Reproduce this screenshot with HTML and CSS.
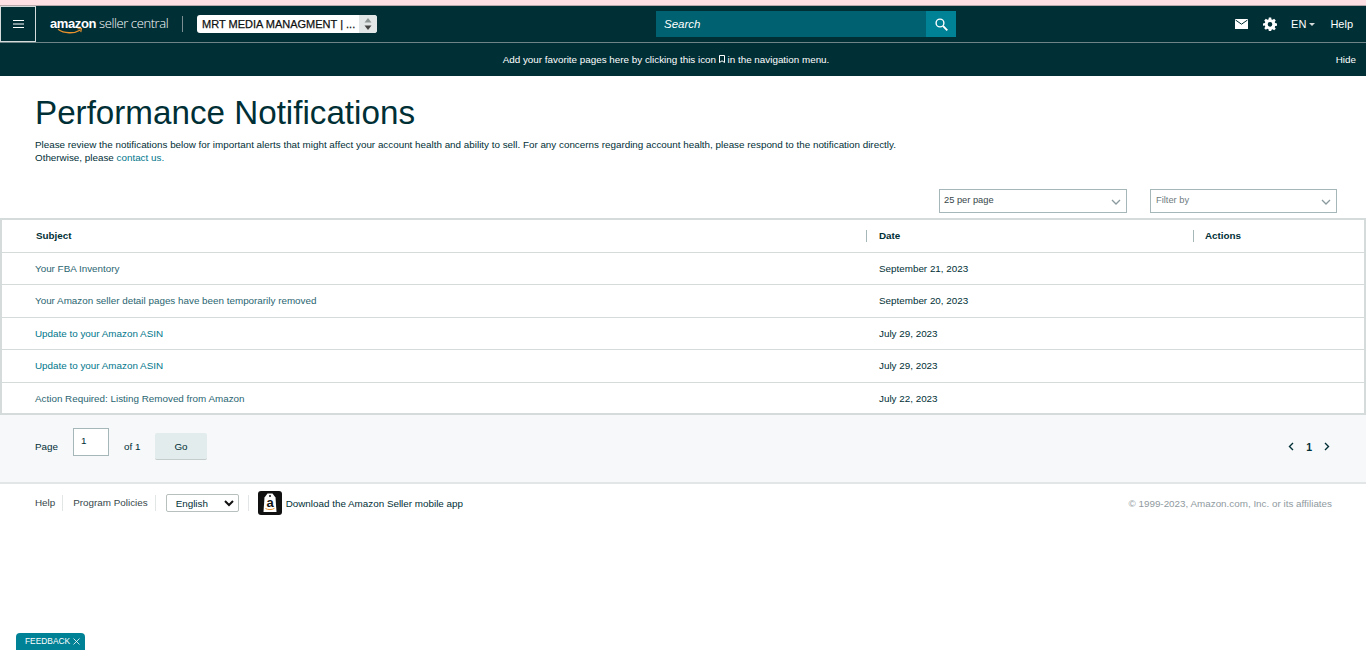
FILE: index.html
```html
<!DOCTYPE html>
<html lang="en">
<head>
  <meta charset="UTF-8">
  <title>Performance Notifications</title>
  <link rel="stylesheet" href="styles.css">
</head>
<body>
  <div class="top-strip"></div>
  <header class="navbar">
    <button class="menu-btn" aria-label="Menu">
      <svg width="11" height="8" viewBox="0 0 11 8"><path d="M0 .5h11M0 4h11M0 7.500h11" stroke="#fff" stroke-width="1"/></svg>
    </button>
    <div class="logo">
      <span class="logo-amazon">amazon</span><span class="logo-seller">seller central</span>
      <svg class="logo-smile" width="26" height="7" viewBox="0 0 26 7"><path d="M1 1.2C7 5.6 17 6 23.5 2" fill="none" stroke="#e8912d" stroke-width="1.3"/><path d="M20.5 .8l4-.3-.7 3.6" fill="none" stroke="#e8912d" stroke-width="1.1"/></svg>
    </div>
    <div class="nav-divider"></div>
    <div class="account-select">
      <span class="account-name">MRT MEDIA MANAGMENT | ...</span>
      <span class="account-arrows">
        <svg width="8" height="12" viewBox="0 0 8 12"><path d="M4 0l3.5 4.5h-7z" fill="#8d9494"/><path d="M4 12L.5 7.500h7z" fill="#444"/></svg>
      </span>
    </div>
    <form class="search">
      <span class="search-text">Search</span>
      <span class="search-btn">
        <svg width="13" height="13" viewBox="0 0 13 13"><circle cx="5" cy="5" r="3.900" fill="none" stroke="#fff" stroke-width="1.400"/><path d="M8 8l4.300 4.300" stroke="#fff" stroke-width="1.800"/></svg>
      </span>
    </form>
    <nav class="nav-right">
      <svg class="mail" width="13" height="10" viewBox="0 0 13 10"><path d="M0 0h13v10H0z" fill="#fff"/><path d="M.5 1l6 4.200 6-4.200" fill="none" stroke="#002f36" stroke-width="1"/></svg>
      <svg class="gear" width="14" height="14" viewBox="0 0 24 24"><path fill="#fff" fill-rule="evenodd" d="M10 1h4l.6 3.100 1.900.8L19.100 3.100l2.800 2.800-1.800 2.600.8 1.900L24 11v4l-3.100.6-.8 1.900 1.800 2.600-2.800 2.800-2.600-1.800-1.900.8L14 24h-4l-.6-3.100-1.900-.8-2.600 1.800-2.800-2.800 1.800-2.600-.8-1.900L0 15v-4l3.100-.6.800-1.900L2.100 5.900l2.800-2.800 2.600 1.800 1.900-.8zM12 8.500a4 4 0 1 0 0 8 4 4 0 0 0 0-8z"/></svg>
      <span class="lang">EN<i class="caret"></i></span>
      <span class="help">Help</span>
    </nav>
  </header>
  <div class="favorites">
    <span class="fav-text">Add your favorite pages here by clicking this icon
      <svg width="6" height="8" viewBox="0 0 6 8"><path d="M.5.5h5v7L3 5.800.5 7.500z" fill="none" stroke="#fff" stroke-width="1"/></svg>
      in the navigation menu.</span>
    <span class="fav-hide">Hide</span>
  </div>

  <main>
    <h1>Performance Notifications</h1>
    <p class="intro">Please review the notifications below for important alerts that might affect your account health and ability to sell. For any concerns regarding account health, please respond to the notification directly.<br>Otherwise, please <a href="#">contact us.</a></p>

    <div class="filters">
      <div class="dropdown">25 per page
        <svg width="10" height="6" viewBox="0 0 10 6"><path d="M1 1l4 4 4-4" fill="none" stroke="#8a9a9e" stroke-width="1.300"/></svg>
      </div>
      <div class="dropdown placeholder">Filter by
        <svg width="10" height="6" viewBox="0 0 10 6"><path d="M1 1l4 4 4-4" fill="none" stroke="#8a9a9e" stroke-width="1.300"/></svg>
      </div>
    </div>

    <table class="notifications">
      <thead>
        <tr class="r33">
          <th class="col-subject">Subject</th>
          <th class="col-date"><span>Date</span></th>
          <th class="col-actions"><span>Actions</span></th>
        </tr>
      </thead>
      <tbody>
        <tr class="r32"><td class="col-subject"><a class="visited" href="#">Your FBA Inventory</a></td><td class="col-date">September 21, 2023</td><td></td></tr>
        <tr class="r33"><td class="col-subject"><a class="visited" href="#">Your Amazon seller detail pages have been temporarily removed</a></td><td class="col-date">September 20, 2023</td><td></td></tr>
        <tr class="r32"><td class="col-subject"><a href="#">Update to your Amazon ASIN</a></td><td class="col-date">July 29, 2023</td><td></td></tr>
        <tr class="r33"><td class="col-subject"><a href="#">Update to your Amazon ASIN</a></td><td class="col-date">July 29, 2023</td><td></td></tr>
        <tr class="r32"><td class="col-subject"><a class="visited" href="#">Action Required: Listing Removed from Amazon</a></td><td class="col-date">July 22, 2023</td><td></td></tr>
      </tbody>
    </table>

    <div class="pager">
      <span class="page-label">Page</span>
      <span class="page-input">1</span>
      <span class="page-of">of 1</span>
      <button class="go-btn">Go</button>
      <div class="page-nav">
        <svg width="6" height="9" viewBox="0 0 6 9"><path d="M5 1L1.500 4.500 5 8" fill="none" stroke="#002f36" stroke-width="1.400"/></svg>
        <b>1</b>
        <svg width="6" height="9" viewBox="0 0 6 9"><path d="M1 1l3.500 3.500L1 8" fill="none" stroke="#002f36" stroke-width="1.400"/></svg>
      </div>
    </div>
  </main>

  <footer class="site-footer">
    <a href="#" class="foot-link">Help</a>
    <a href="#" class="foot-link">Program Policies</a>
    <div class="lang-select">English
      <svg width="10" height="7" viewBox="0 0 10 7"><path d="M1 1l4 4 4-4" fill="none" stroke="#111" stroke-width="2"/></svg>
    </div>
    <div class="foot-sep"></div>
    <svg class="app-icon" width="24" height="24" viewBox="0 0 24 24">
      <rect width="24" height="24" rx="3" fill="#111"/>
      <path d="M6.500 6.500L9.500 2.500h5l3 4L18.500 21h-13z" fill="#fff"/>
      <circle cx="12" cy="5" r="1" fill="#111"/>
      <text x="12" y="16" font-size="13" font-weight="700" text-anchor="middle" fill="#111" font-family="Liberation Sans, sans-serif">a</text>
      <path d="M7.500 17.500c2.500 1.500 6.500 1.500 9-.2" fill="none" stroke="#e8912d" stroke-width="1"/>
    </svg>
    <span class="app-text">Download the Amazon Seller mobile app</span>
    <span class="copyright">© 1999-2023, Amazon.com, Inc. or its affiliates</span>
  </footer>

  <div class="feedback">FEEDBACK
    <svg width="7" height="7" viewBox="0 0 7 7"><path d="M.5.500l6 6M6.500.500l-6 6" stroke="#fff" stroke-width=".8"/></svg>
  </div>
</body>
</html>
```

FILE: styles.css
```css
* {
  box-sizing: border-box;
}
html, body {
  height: 100%;
}
body {
  margin: 0;
  font-family: "Liberation Sans", Arial, sans-serif;
  font-size: 9.85px;
  color: #002f36;
  background: #fff;
  overflow: hidden;
}
a {
  color: #00768b;
  text-decoration: none;
}
.top-strip {
  height: 6px;
  background: #fde0e4;
  border-bottom: 1px solid #b9a9ac;
}
.navbar {
  height: 37px;
  background: #002f36;
  border-bottom: 1px solid #6f8487;
  display: flex;
  align-items: center;
  color: #fff;
}
.menu-btn {
  width: 36px;
  height: 36px;
  padding: 0;
  background: #002f36;
  border: 1px solid #d5dbdb;
  display: flex;
  align-items: center;
  justify-content: center;
}
.logo {
  margin-left: 14px;
  width: 120px;
  height: 24px;
  position: relative;
  line-height: 22px;
  white-space: nowrap;
}
.logo-amazon {
  font-weight: 700;
  letter-spacing: -0.4px;
  font-size: 13px;
}
.logo-seller {
  margin-left: 3px;
  font-size: 13px;
  letter-spacing: -0.4px;
  font-family: "Open Sans", sans-serif;
  font-weight: 300;
}
.logo-smile {
  position: absolute;
  left: 7px;
  top: 16px;
}
.nav-divider {
  width: 1px;
  height: 16px;
  background: #7b8e91;
  margin-left: 12px;
}
.account-select {
  margin-left: 14px;
  width: 180px;
  height: 18px;
  background: #fff;
  border-radius: 3px;
  display: flex;
  align-items: center;
  justify-content: space-between;
  color: #0f1111;
  font-size: 11px;
  -webkit-text-stroke: 0.25px #0f1111;
  overflow: hidden;
}
.account-name {
  padding-left: 5px;
  white-space: nowrap;
}
.account-arrows {
  width: 18px;
  height: 18px;
  background: #e3e6e6;
  display: flex;
  align-items: center;
  justify-content: center;
  flex-shrink: 0;
}
.search {
  margin: 0 0 0 279px;
  width: 300px;
  height: 26px;
  display: flex;
  background: #006170;
  color: #fff;
}
.search-text {
  flex: 1;
  font-style: italic;
  font-size: 11.500px;
  line-height: 26px;
  padding-left: 8px;
}
.search-btn {
  width: 30px;
  background: #008296;
  display: flex;
  align-items: center;
  justify-content: center;
}
.nav-right {
  margin-left: auto;
  padding-right: 13px;
  display: flex;
  align-items: center;
  font-size: 11px;
}
.gear {
  margin-left: 15px;
}
.lang {
  margin-left: 14px;
  display: flex;
  align-items: center;
}
.caret {
  margin-left: 3px;
  border-left: 3.500px solid transparent;
  border-right: 3.500px solid transparent;
  border-top: 3.500px solid #d5dbdb;
}
.help {
  margin-left: 15px;
}
.favorites {
  height: 33px;
  background: #002f36;
  color: #fff;
  position: relative;
  display: flex;
  align-items: center;
  justify-content: center;
  padding-right: 34px;
}
.fav-hide {
  position: absolute;
  right: 10px;
}
main h1 {
  margin: 17px 0 0 35px;
  font-size: 33.200px;
  line-height: 40px;
  font-weight: 400;
  color: #002f36;
}
.intro {
  margin: 5px 0 0 35px;
  line-height: 13px;
  width: 900px;
}
.filters {
  margin-top: 25px;
  height: 24px;
  display: flex;
  justify-content: flex-end;
  gap: 23px;
  padding-right: 29px;
}
.dropdown {
  width: 188px;
  height: 24px;
  border: 1px solid #a6b7ba;
  padding: 0 5px 2px 4px;
  font-size: 9.300px;
  display: flex;
  align-items: center;
  justify-content: space-between;
  color: #37474a;
}
.dropdown svg {
  margin-top: 4px;
}
.dropdown.placeholder {
  width: 187px;
  padding-left: 5px;
  color: #6f7c80;
}
.notifications {
  margin-top: 5px;
  width: 100%;
  table-layout: fixed;
  border-collapse: collapse;
  border: 2px solid #d5dbdb;
}
.notifications tr {
  border-bottom: 1px solid #d5dbdb;
}
.r33 {
  height: 33px;
}
.r32 {
  height: 32px;
}
.notifications th {
  text-align: left;
  font-weight: 700;
  padding: 0;
}
.notifications td {
  padding: 0;
}
.notifications tbody .r33 td {
  padding-bottom: 1px;
}
.notifications tbody tr:last-child td {
  padding-top: 1px;
}
.col-subject {
  width: 865px;
  padding-left: 33px !important;
}
.notifications th.col-subject {
  padding-left: 34px !important;
}
.col-date {
  width: 327px;
  padding-left: 13px !important;
}
.notifications th.col-date,
.notifications th.col-actions {
  padding-left: 0 !important;
}
.notifications th span {
  display: block;
  border-left: 1px solid #a6b7ba;
  height: 12px;
  line-height: 12px;
  padding-left: 11px;
}
.notifications th.col-date span {
  padding-left: 12px;
}
.notifications a.visited {
  color: #2a6571;
}
.pager {
  height: 69px;
  background: #f7f8fa;
  border-bottom: 2px solid #e3e6e6;
  display: flex;
  align-items: center;
  padding: 0 36px 4px 35px;
}
.page-label {
  width: 38px;
}
.page-input {
  width: 36px;
  height: 28px;
  margin-top: -9px;
  border: 1px solid #a6b7ba;
  background: #fff;
  padding: 6px 0 0 7px;
}
.page-of {
  margin-left: 15px;
  width: 31px;
}
.go-btn {
  width: 52px;
  height: 27px;
  padding: 0;
  background: #e3ecec;
  border: 0;
  border-bottom: 1px solid #c4cccc;
  border-radius: 2px;
  font: inherit;
  color: #002f36;
}
.page-nav {
  margin-left: auto;
  display: flex;
  align-items: center;
  gap: 12px;
  font-size: 10.500px;
}
.site-footer {
  height: 38px;
  display: flex;
  align-items: center;
  padding: 0 34px 0 35px;
}
.foot-link {
  color: #37474a;
  border-right: 1px solid #e3e6e6;
  line-height: 16px;
  padding-right: 7px;
  margin-right: 10px;
}
.lang-select {
  width: 73px;
  height: 18px;
  border: 1px solid #b8bfbf;
  border-radius: 2px;
  margin-right: 9px;
  display: flex;
  align-items: center;
  justify-content: space-between;
  padding: 0 4px 0 9px;
}
.foot-sep {
  width: 1px;
  height: 16px;
  background: #e3e6e6;
  margin-right: 9px;
}
.app-text {
  margin-left: 4px;
}
.copyright {
  margin-left: auto;
  color: #8f9aa0;
}
.feedback {
  position: fixed;
  left: 16px;
  bottom: 0;
  width: 69px;
  height: 17px;
  background: #008296;
  border-radius: 4px 4px 0 0;
  color: #fff;
  font-size: 8.400px;
  line-height: 17px;
  padding-left: 9px;
  display: flex;
  align-items: center;
  gap: 3px;
}
```
